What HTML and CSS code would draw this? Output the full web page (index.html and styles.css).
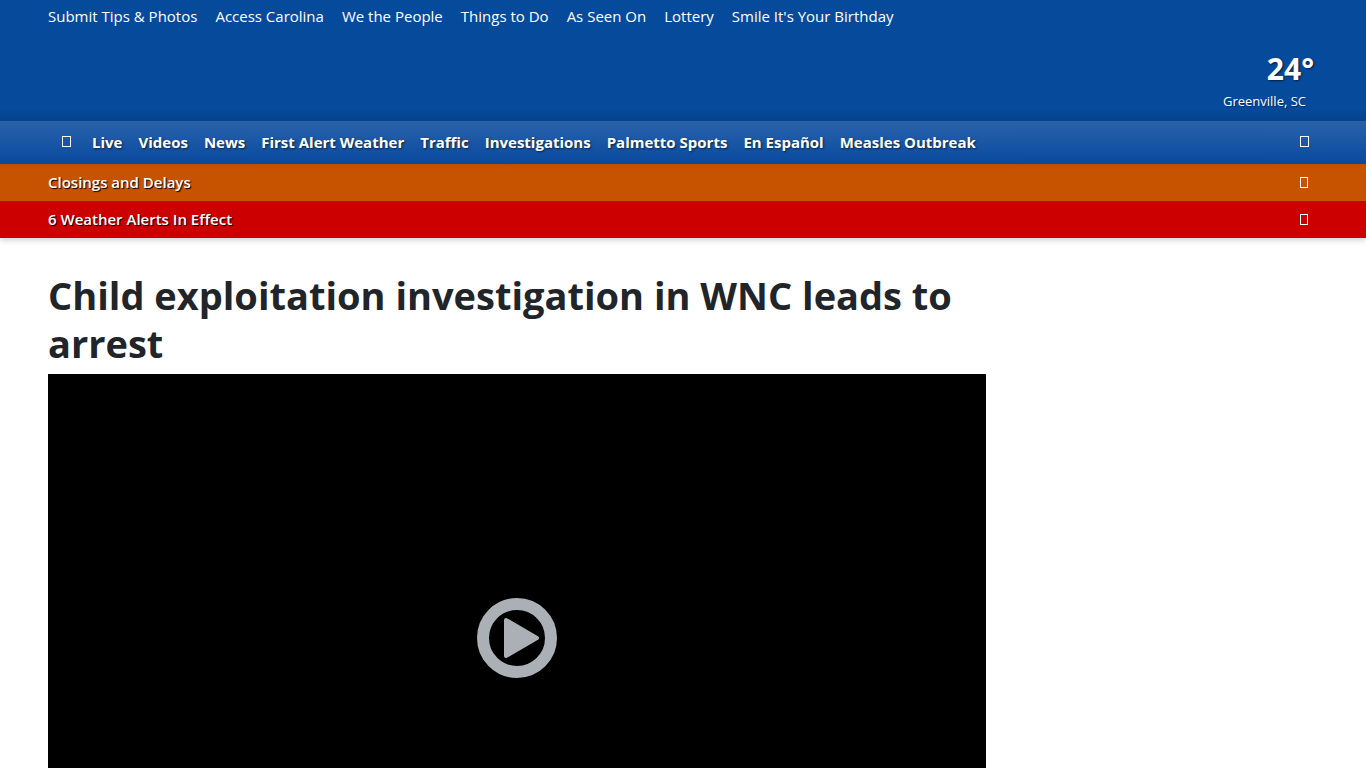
FILE: index.html
```html
<!DOCTYPE html>
<html lang="en">
<head>
  <meta charset="UTF-8" />
  <meta name="viewport" content="width=device-width, initial-scale=1" />
  <title>Child exploitation investigation in WNC leads to arrest</title>
  <link rel="stylesheet" href="styles.css">
</head>
<body>

  <header class="site-header">
    <!-- Quick links and current weather -->
    <div class="masthead">
      <nav class="quick-links" aria-label="Quick links">
        <a href="#">Submit Tips &amp; Photos</a>
        <a href="#">Access Carolina</a>
        <a href="#">We the People</a>
        <a href="#">Things to Do</a>
        <a href="#">As Seen On</a>
        <a href="#">Lottery</a>
        <a href="#">Smile It's Your Birthday</a>
      </nav>
      <a class="weather" href="#">
        <span class="temp">24°</span>
        <span class="city">Greenville, SC</span>
      </a>
    </div>

    <!-- Main navigation -->
    <div class="main-nav">
      <nav class="nav-links" aria-label="Main">
        <button class="icon-btn" type="button" aria-label="Menu">
          <svg width="9" height="11" viewBox="0 0 9 11"><rect x="0.5" y="0.5" width="8" height="10" /></svg>
        </button>
        <a href="#">Live</a>
        <a href="#">Videos</a>
        <a href="#">News</a>
        <a href="#">First Alert Weather</a>
        <a href="#">Traffic</a>
        <a href="#">Investigations</a>
        <a href="#">Palmetto Sports</a>
        <a href="#">En Español</a>
        <a href="#">Measles Outbreak</a>
      </nav>
      <button class="icon-btn" type="button" aria-label="Search">
        <svg width="9" height="11" viewBox="0 0 9 11"><rect x="0.5" y="0.5" width="8" height="10" /></svg>
      </button>
    </div>

    <!-- Alert bars -->
    <a class="alert closings" href="#">
      <span>Closings and Delays</span>
      <svg width="8" height="11" viewBox="0 0 8 11"><rect x="0.5" y="0.5" width="7" height="10" /></svg>
    </a>
    <a class="alert severe" href="#">
      <span>6 Weather Alerts In Effect</span>
      <svg width="8" height="11" viewBox="0 0 8 11"><rect x="0.5" y="0.5" width="7" height="10" /></svg>
    </a>
  </header>

  <main class="page">
    <article class="story">
      <h1>Child exploitation investigation in WNC leads to arrest</h1>
      <div class="video">
        <button class="play" type="button" aria-label="Play video">
          <svg width="80" height="80" viewBox="0 0 80 80">
            <circle cx="40" cy="40" r="34" fill="none" stroke="#abb0b6" stroke-width="12" />
            <path d="M29 22 L60 40 L29 58 Z" fill="#abb0b6" stroke="#abb0b6" stroke-width="4" stroke-linejoin="round" />
          </svg>
        </button>
      </div>
    </article>
  </main>

</body>
</html>
```

FILE: styles.css
```css
* {
  box-sizing: border-box;
}

body {
  margin: 0;
  font-family: "Segoe UI", "Open Sans", "Noto Sans", sans-serif;
  font-size: 15px;
  line-height: 24px;
  color: #212529;
  background: #fff;
}

a {
  color: #fff;
  text-decoration: none;
}

.site-header {
  color: #fff;
  box-shadow: 0 2px 6px rgba(0,0,0,0.2);
}

/* Blue top area */
.masthead {
  padding: 4px 48px 8px;
  background: linear-gradient(#064a9c 90%, #05428c);
}

.quick-links {
  display: flex;
  flex-wrap: wrap;
  gap: 0 18px;
}

.weather {
  display: flex;
  flex-direction: column;
  align-items: flex-end;
  width: fit-content;
  margin: 21px 0 0 auto;
}

.temp {
  padding-right: 4px;
  font-size: 30px;
  font-weight: 700;
  line-height: 40px;
  text-shadow: 1px 1px 2px rgba(0,0,0,0.6);
}

.city {
  padding-right: 12px;
  font-size: 13px;
  text-shadow: 1px 1px 1px rgba(0,0,0,0.4);
}

/* Main navigation bar */
.main-nav {
  display: flex;
  justify-content: space-between;
  align-items: center;
  min-height: 43px;
  padding: 0 48px 2px;
  background: linear-gradient(#2a62ab, #084a9f);
}

.nav-links {
  display: flex;
  flex-wrap: wrap;
  align-items: center;
  gap: 0 16px;
  font-weight: 700;
  text-shadow: 1px 1px 2px rgba(0,0,0,0.6);
}

.icon-btn {
  display: flex;
  padding: 8px 9px 8px 14px;
  border: 0;
  background: none;
  cursor: pointer;
}

.nav-links .icon-btn {
  padding-right: 5px;
}

.icon-btn rect,
.alert rect {
  fill: none;
  stroke: #fff;
}

/* Alert bars under the navigation */
.alert {
  display: flex;
  justify-content: space-between;
  align-items: center;
  min-height: 37px;
  padding: 0 58px 1px 48px;
  font-weight: 600;
  text-shadow: 1px 1px 1px #000;
}

.closings {
  background: linear-gradient(#bd4f00, #c75300 4px);
}

.severe {
  background: #c00;
}

/* Story column with room for a sidebar */
.page {
  display: grid;
  grid-template-columns: 3fr 1fr;
  gap: 20px;
  padding: 33px 48px;
}

h1 {
  margin: 0 0 7px;
  font-size: 38px;
  font-weight: 700;
  line-height: 48px;
}

.video {
  display: flex;
  justify-content: center;
  align-items: center;
  aspect-ratio: 16 / 9;
  background: #000;
}

.play {
  display: flex;
  padding: 0;
  border: 0;
  background: none;
  cursor: pointer;
}
```
